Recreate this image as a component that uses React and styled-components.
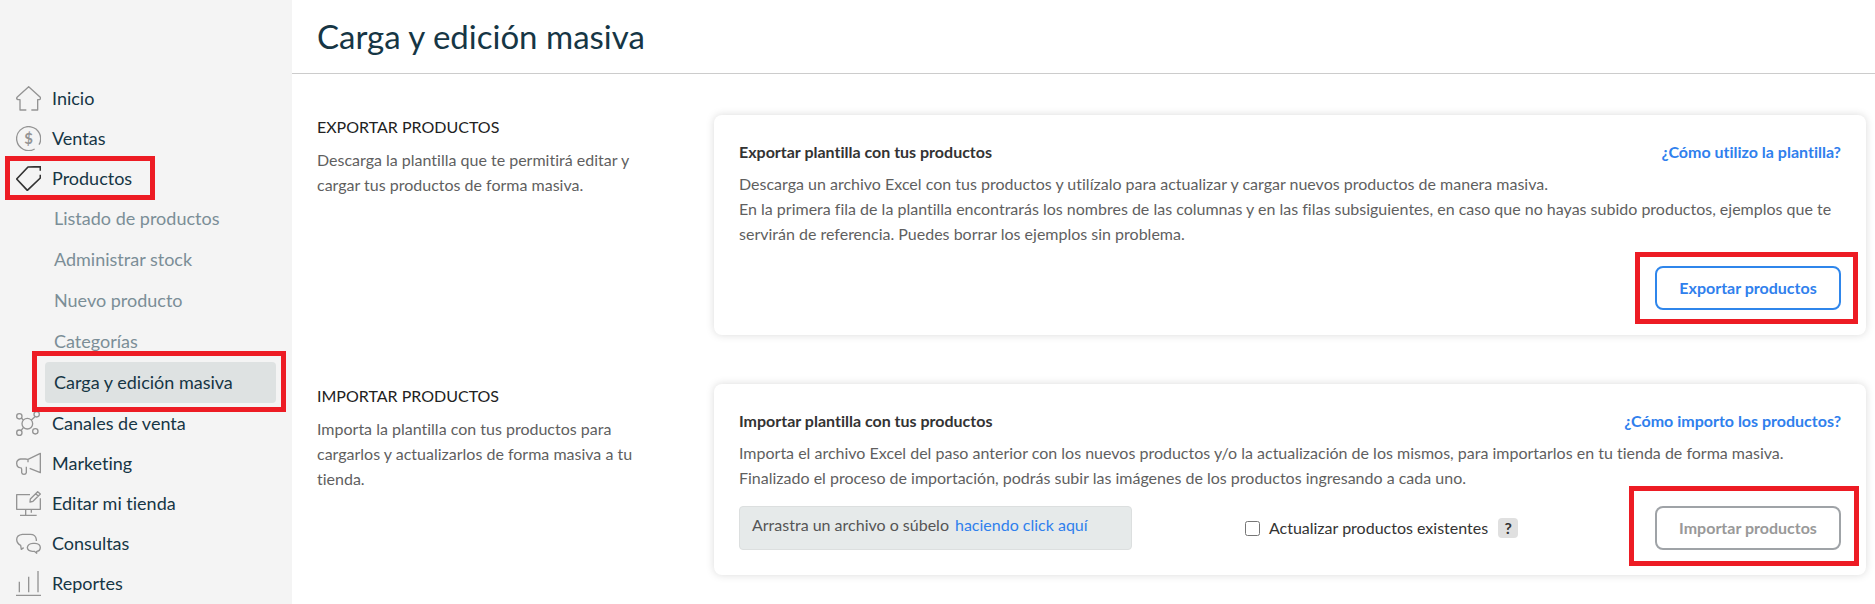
import { useState } from 'react';
import styled, { createGlobalStyle } from 'styled-components';

const HomeIcon = () => (
  <Icon viewBox="0 0 75 75">
    <path d="M31 72H12V41H6Q-1 38 4 33L38 2L72 33Q77 38 70 41H65V72H46" />
  </Icon>
);

const SalesIcon = () => (
  <Icon viewBox="0 0 75 75">
    <path d="M56 69A36 36 0 1 1 69 56" />
    <text x="38" y="53" textAnchor="middle">
      $
    </text>
  </Icon>
);

const TagIcon = () => (
  <Icon viewBox="0 0 75 75" $active>
    <path d="M73 14V2L36 3L2 39L34 73L73 36V26" />
  </Icon>
);

const ChannelsIcon = () => (
  <Icon viewBox="0 0 75 75">
    <circle cx="34" cy="38" r="16" />
    <circle cx="10" cy="16" r="8" />
    <circle cx="62" cy="10" r="8" />
    <circle cx="10" cy="65" r="8" />
    <circle cx="58" cy="61" r="8" />
    <path d="M16 21L22 27M46 27L57 17M22 50L15 59" />
  </Icon>
);

const MarketingIcon = () => (
  <Icon viewBox="0 0 75 75">
    <path d="M36 34V25L73 7V65L41 52M36 25L28 24H14Q2 26 2 37Q3 49 12 50Q17 50 17 55V65Q18 70 24 70Q30 70 31 65V47" />
  </Icon>
);

const StoreIcon = () => (
  <Icon viewBox="0 0 75 75">
    <path d="M42 11H2V55H73V22M29 57V73M46 57V65M12 73H62" />
    <path d="M42 33L43 24L65 2L73 9L51 31Z M59 8L67 15" />
  </Icon>
);

const ChatIcon = () => (
  <Icon viewBox="0 0 75 75">
    <path d="M61 30V25Q59 10 43 10H19Q2 12 2 26Q3 38 14 43L16 55L23 50" />
    <path d="M51 37H57Q73 38 73 50Q72 61 62 61V67L55 61H49Q35 60 34 50Q35 38 51 37Z" />
  </Icon>
);

const ReportsIcon = () => (
  <Icon viewBox="0 0 75 75">
    <path d="M10 32V64M38 17V64M66 0V64M0 73H75" />
  </Icon>
);

const mainItems = [
  { label: 'Inicio', icon: HomeIcon },
  { label: 'Ventas', icon: SalesIcon },
  { label: 'Productos', icon: TagIcon, marked: true },
];

const productItems = [
  { label: 'Listado de productos' },
  { label: 'Administrar stock' },
  { label: 'Nuevo producto' },
  { label: 'Categorías' },
  { label: 'Carga y edición masiva', active: true },
];

const otherItems = [
  { label: 'Canales de venta', icon: ChannelsIcon },
  { label: 'Marketing', icon: MarketingIcon },
  { label: 'Editar mi tienda', icon: StoreIcon },
  { label: 'Consultas', icon: ChatIcon },
  { label: 'Reportes', icon: ReportsIcon },
];

const NavItem = ({ label, icon: ItemIcon, marked }) => (
  <NavLink href="#">
    <ItemIcon />
    {label}
    {marked && <Mark $inset="-2px -23px -2px -11px" />}
  </NavLink>
);

export default function App() {
  const [update, setUpdate] = useState(false);

  return (
    <>
      <GlobalStyle />
      <Page>
        <Sidebar>
          {mainItems.map((item) => (
            <NavItem key={item.label} {...item} />
          ))}
          <SubMenu>
            {productItems.map(({ label, active }) => (
              <SubLink key={label} href="#" $active={active}>
                {label}
                {active && <Mark $inset="-11px -10px -9px -13px" />}
              </SubLink>
            ))}
          </SubMenu>
          {otherItems.map((item) => (
            <NavItem key={item.label} {...item} />
          ))}
        </Sidebar>
        <Main>
          <Header>
            <Title>Carga y edición masiva</Title>
          </Header>
          <Content>
            <Section>
              <Intro>
                <SectionTitle>EXPORTAR PRODUCTOS</SectionTitle>
                <Text>
                  Descarga la plantilla que te permitirá editar y cargar tus productos de forma
                  masiva.
                </Text>
              </Intro>
              <Card>
                <CardHeader>
                  <CardTitle>Exportar plantilla con tus productos</CardTitle>
                  <HelpLink href="#">¿Cómo utilizo la plantilla?</HelpLink>
                </CardHeader>
                <Text>
                  Descarga un archivo Excel con tus productos y utilízalo para actualizar y cargar
                  nuevos productos de manera masiva.
                  <br />
                  En la primera fila de la plantilla encontrarás los nombres de las columnas y en
                  las filas subsiguientes, en caso que no hayas subido productos, ejemplos que te
                  servirán de referencia. Puedes borrar los ejemplos sin problema.
                </Text>
                <Actions>
                  <ButtonBox>
                    <Button type="button">Exportar productos</Button>
                    <Mark $inset="-14px -17px -14px -20px" />
                  </ButtonBox>
                </Actions>
              </Card>
            </Section>
            <Section>
              <Intro>
                <SectionTitle>IMPORTAR PRODUCTOS</SectionTitle>
                <Text>
                  Importa la plantilla con tus productos para cargarlos y actualizarlos de forma
                  masiva a tu tienda.
                </Text>
              </Intro>
              <Card>
                <CardHeader>
                  <CardTitle>Importar plantilla con tus productos</CardTitle>
                  <HelpLink href="#">¿Cómo importo los productos?</HelpLink>
                </CardHeader>
                <Text>
                  Importa el archivo Excel del paso anterior con los nuevos productos y/o la
                  actualización de los mismos, para importarlos en tu tienda de forma masiva.
                  <br />
                  Finalizado el proceso de importación, podrás subir las imágenes de los productos
                  ingresando a cada uno.
                </Text>
                <ImportRow>
                  <DropZone>
                    Arrastra un archivo o súbelo
                    <DropLink href="#">haciendo click aquí</DropLink>
                  </DropZone>
                  <UpdateOption>
                    <Checkbox
                      id="update"
                      type="checkbox"
                      checked={update}
                      onChange={() => setUpdate(!update)}
                    />
                    <label htmlFor="update">Actualizar productos existentes</label>
                    <HelpBadge type="button">?</HelpBadge>
                  </UpdateOption>
                  <ButtonBox>
                    <Button type="button" disabled>
                      Importar productos
                    </Button>
                    <Mark $inset="-20px -18px -16px -26px" />
                  </ButtonBox>
                </ImportRow>
              </Card>
            </Section>
          </Content>
        </Main>
      </Page>
    </>
  );
}

const GlobalStyle = createGlobalStyle`
  * {
    box-sizing: border-box;
  }
  body {
    margin: 0;
    background: #ffffff;
    color: #333333;
    font-family: Lato, 'Liberation Sans', sans-serif;
    font-size: 16px;
    line-height: 24px;
    font-variant-ligatures: no-common-ligatures;
  }
  h1, h2, h3, p {
    margin: 0;
  }
  a {
    text-decoration: none;
  }
`;

const Page = styled.div`
  display: flex;
  min-height: 100vh;
`;

const Sidebar = styled.nav`
  flex: 0 0 292px;
  padding-top: 78px;
  background: #f4f4f4;
`;

const NavLink = styled.a`
  position: relative;
  display: flex;
  align-items: center;
  gap: 11px;
  width: fit-content;
  height: 40px;
  margin-left: 16px;
  color: #163645;
  font-size: 18px;
`;

const Icon = styled.svg`
  flex: none;
  width: 25px;
  height: 25px;
  fill: none;
  stroke: ${({ $active }) => ($active ? '#333333' : '#949494')};
  stroke-width: ${({ $active }) => ($active ? 5 : 4)};
  stroke-linejoin: round;

  text {
    fill: #949494;
    stroke: none;
    font-size: 45px;
    font-weight: 700;
  }
`;

const SubMenu = styled.div`
  padding: 0 16px 0 45px;
`;

const SubLink = styled.a`
  position: relative;
  display: block;
  height: 41px;
  padding-left: 9px;
  border-radius: 4px;
  background: ${({ $active }) => ($active ? '#dee2e2' : 'transparent')};
  color: ${({ $active }) => ($active ? '#163645' : '#7b8e97')};
  font-size: 18px;
  line-height: 41px;
`;

const Mark = styled.span`
  position: absolute;
  inset: ${({ $inset }) => $inset};
  z-index: 1;
  border: 5px solid #ed1c24;
  pointer-events: none;
`;

const Main = styled.main`
  flex: 1;
  min-width: 0;
`;

const Header = styled.header`
  padding: 16px 25px 17px;
  border-bottom: 1px solid #cccccc;
`;

const Title = styled.h1`
  color: #163645;
  font-size: 33px;
  font-weight: 400;
  line-height: 40px;
`;

const Content = styled.div`
  display: flex;
  flex-direction: column;
  gap: 49px;
  padding: 41px 9px 28px 25px;
`;

const Section = styled.section`
  display: grid;
  grid-template-columns: 349px minmax(0, 1fr);
  gap: 48px;
`;

const Intro = styled.div`
  display: flex;
  flex-direction: column;
  gap: 8px;
`;

const SectionTitle = styled.h2`
  color: #222222;
  font-size: 16px;
  font-weight: 400;
  line-height: 24px;
`;

const Text = styled.p`
  color: #5f5f5f;
  line-height: 25px;
`;

const Card = styled.div`
  padding: 25px;
  border-radius: 8px;
  background: #ffffff;
  box-shadow: 0 0 8px rgba(0, 0, 0, 0.15);
`;

const CardHeader = styled.div`
  display: flex;
  justify-content: space-between;
  margin-bottom: 7px;
`;

const CardTitle = styled.h3`
  font-size: 16px;
  font-weight: 700;
`;

const HelpLink = styled.a`
  color: #2f80ed;
  font-weight: 700;
`;

const Actions = styled.div`
  display: flex;
  justify-content: flex-end;
  margin-top: 20px;
`;

const ButtonBox = styled.div`
  position: relative;
`;

const Button = styled.button`
  display: block;
  width: 186px;
  height: 44px;
  padding: 0 0 2px;
  border: 2px solid #2f86eb;
  border-radius: 8px;
  background: #ffffff;
  color: #2f80ed;
  font-family: inherit;
  font-size: 16px;
  font-weight: 700;

  &:disabled {
    border-color: #9fa3a7;
    color: #999999;
  }
`;

const ImportRow = styled.div`
  display: flex;
  align-items: center;
  justify-content: space-between;
  margin-top: 16px;
`;

const DropZone = styled.div`
  display: flex;
  gap: 6px;
  width: 393px;
  height: 44px;
  padding: 6px 12px;
  border: 1px solid #dcdfdf;
  border-radius: 4px;
  background: #e6eaea;
  color: #555555;
`;

const DropLink = styled.a`
  color: #2f80ed;
`;

const UpdateOption = styled.div`
  display: flex;
  align-items: center;
  margin-right: 24px;
`;

const Checkbox = styled.input`
  width: 15px;
  height: 15px;
  margin: 0 9px 0 0;
`;

const HelpBadge = styled.button`
  width: 20px;
  height: 20px;
  margin-left: 10px;
  padding: 0;
  border: 0;
  border-radius: 4px;
  background: #e0e0e0;
  color: #333333;
  font-family: inherit;
  font-size: 16px;
  font-weight: 700;
  line-height: 20px;
`;
